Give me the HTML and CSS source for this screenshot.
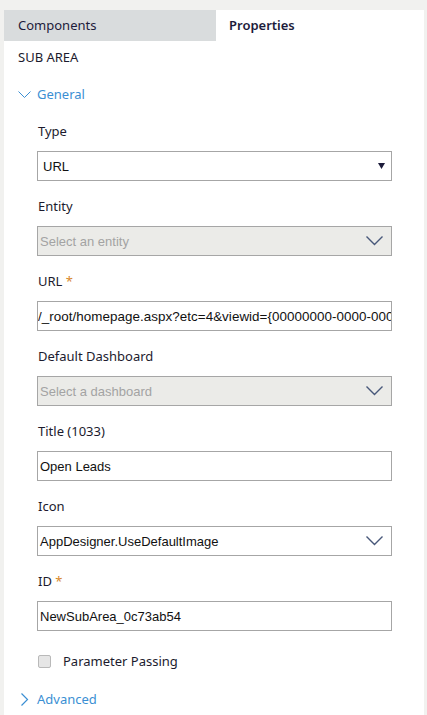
FILE: index.html
```html
<!DOCTYPE html>
<html>
<head>
<meta charset="utf-8">
<link rel="stylesheet" href="styles.css">
</head>
<body>
<div class="panel">
  <div class="tabs">
    <div class="tab tab-inactive">Components</div>
    <div class="tab tab-active">Properties</div>
  </div>
  <div class="content">
    <div class="heading">SUB AREA</div>
    <div class="section-toggle">
      <svg class="chev-down" width="13" height="8" viewBox="0 0 13 8"><polyline points="0.5,0.5 6.5,6.5 12.5,0.5" fill="none" stroke="#3b8fd3" stroke-width="1"/></svg>
      <span>General</span>
    </div>
    <div class="fields">
      <div class="field">
        <div class="label">Type</div>
        <div class="box">
          <span class="value">URL</span>
          <svg class="tri" width="7" height="6" viewBox="0 0 7 6"><polygon points="0,0 7,0 3.5,6" fill="#1c1b3a"/></svg>
        </div>
      </div>
      <div class="field">
        <div class="label">Entity</div>
        <div class="box disabled">
          <span class="placeholder">Select an entity</span>
          <svg class="chev" width="17" height="10" viewBox="0 0 17 10"><polyline points="0.5,0.5 8.5,8.5 16.5,0.5" fill="none" stroke="#48587a" stroke-width="1.4"/></svg>
        </div>
      </div>
      <div class="field">
        <div class="label">URL <span class="req">*</span></div>
        <div class="box url">
          <span class="value">/_root/homepage.aspx?etc=4&amp;viewid={00000000-0000-000</span>
        </div>
      </div>
      <div class="field">
        <div class="label">Default Dashboard</div>
        <div class="box disabled">
          <span class="placeholder">Select a dashboard</span>
          <svg class="chev" width="17" height="10" viewBox="0 0 17 10"><polyline points="0.5,0.5 8.5,8.5 16.5,0.5" fill="none" stroke="#48587a" stroke-width="1.4"/></svg>
        </div>
      </div>
      <div class="field">
        <div class="label">Title (1033)</div>
        <div class="box text">
          <span class="value">Open Leads</span>
        </div>
      </div>
      <div class="field">
        <div class="label">Icon</div>
        <div class="box text">
          <span class="value">AppDesigner.UseDefaultImage</span>
          <svg class="chev" width="17" height="10" viewBox="0 0 17 10"><polyline points="0.5,0.5 8.5,8.5 16.5,0.5" fill="none" stroke="#48587a" stroke-width="1.4"/></svg>
        </div>
      </div>
      <div class="field">
        <div class="label">ID <span class="req">*</span></div>
        <div class="box text">
          <span class="value">NewSubArea_0c73ab54</span>
        </div>
      </div>
      <div class="check-row">
        <span class="checkbox"></span>
        <span class="check-label">Parameter Passing</span>
      </div>
    </div>
    <div class="section-toggle advanced">
      <svg class="chev-right" width="8" height="13" viewBox="0 0 8 13"><polyline points="0.5,0.5 6.5,6.5 0.5,12.5" fill="none" stroke="#3b8fd3" stroke-width="1.2"/></svg>
      <span>Advanced</span>
    </div>
  </div>
</div>
</body>
</html>
```
FILE: styles.css
```css
html, body {
  margin: 0;
  padding: 0;
  height: 100%;
}
body {
  background: #f1f1ef;
  font-family: "Noto Sans", "Open Sans", sans-serif;
  color: #1e1e1e;
  overflow: hidden;
}
.panel {
  margin: 10px 3px 0 4px;
  background: #ffffff;
  height: 705px;
}
.tabs {
  display: flex;
  height: 31px;
}
.tab {
  font-size: 13px;
  line-height: 31px;
  color: #1d1b3b;
}
.tab-inactive {
  width: 212px;
  background: #d9dcdd;
  padding-left: 14px;
  box-sizing: border-box;
}
.tab-active {
  padding-left: 13px;
  font-weight: 600;
}
.content {
  padding-left: 14px;
}
.heading {
  margin-top: 6px;
  font-size: 13px;
  line-height: 20px;
  color: #1c1b2e;
}
.section-toggle {
  display: flex;
  align-items: center;
  margin-top: 17px;
  height: 20px;
  font-size: 13px;
  color: #3b8fd3;
}
.chev-down {
  margin-right: 6px;
  margin-top: 1px;
}
.advanced {
  margin-top: 18px;
}
.chev-right {
  margin-left: 3px;
  margin-right: 8px;
}
.fields {
  padding-left: 19px;
  padding-right: 32px;
  margin-top: 17px;
}
.field {
  margin-bottom: 15px;
}
.label {
  font-size: 13px;
  line-height: 20px;
  margin-left: 1px;
  margin-bottom: 10px;
  color: #1c1b2e;
}
.req {
  color: #d8872c;
}
.box {
  height: 30px;
  border: 1px solid #a6a6a6;
  box-sizing: border-box;
  display: flex;
  align-items: center;
  padding: 0 8px 0 5px;
  font-family: "Liberation Sans", Arial, sans-serif;
  font-size: 13px;
  overflow: hidden;
  white-space: nowrap;
  background: #fff;
}
.box .value, .box .placeholder {
  flex: 1;
  min-width: 0;
}
.box.text {
  padding-left: 2px;
}
.box.url {
  padding-left: 0;
  padding-right: 0;
  font-size: 13.4px;
  letter-spacing: 0.05px;
}
.box.disabled {
  background: #ebebe8;
  padding-left: 2px;
}
.placeholder {
  color: #a3a3a3;
}
.value {
  color: #111;
}
.tri {
  margin-right: -2px;
}
.chev {
  flex: none;
  margin-left: 8px;
}
.check-row {
  display: flex;
  align-items: center;
  margin-top: 20px;
  height: 20px;
}
.checkbox {
  width: 11px;
  height: 11px;
  border: 1px solid #b9b9b9;
  background: #e6e6e6;
  border-radius: 2px;
  margin-left: 1px;
  margin-right: 12px;
}
.check-label {
  font-size: 13px;
  color: #1c1b2e;
}
```
